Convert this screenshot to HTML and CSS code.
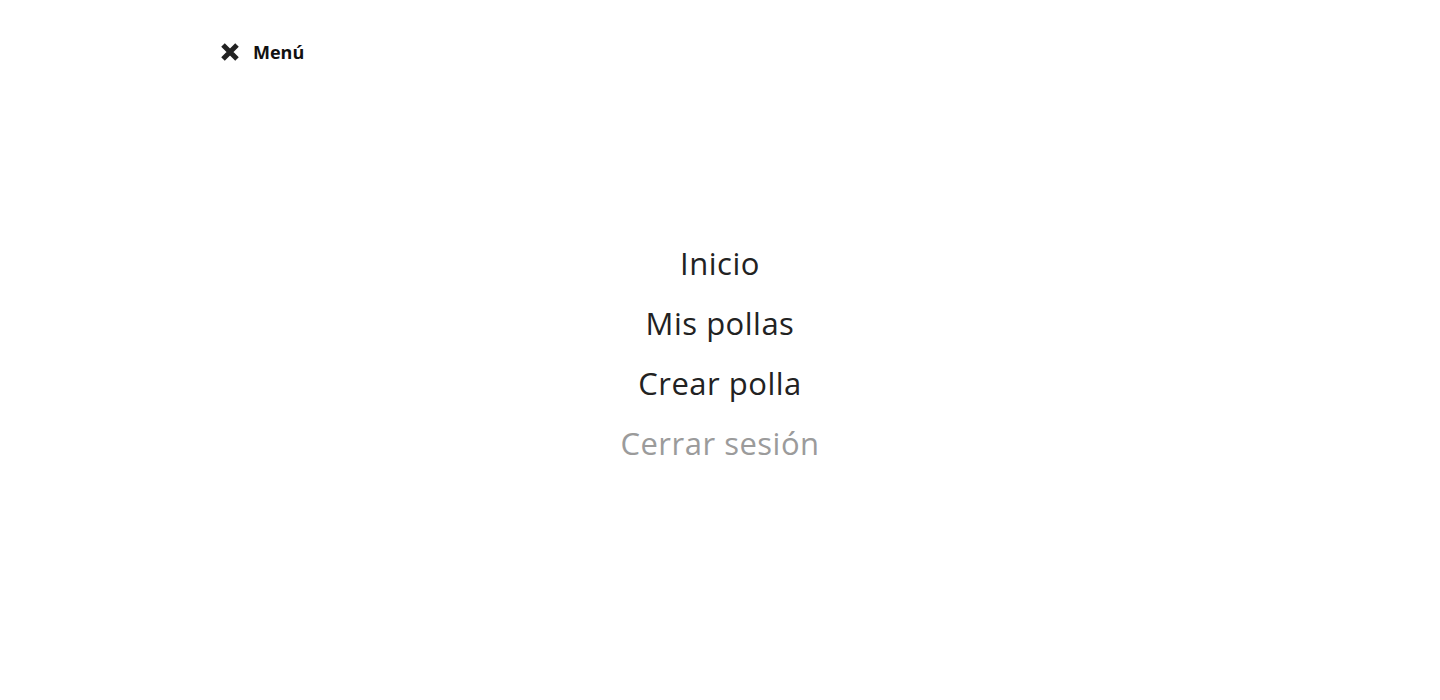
FILE: index.html
```html
<!DOCTYPE html>
<html lang="es">
  <head>
    <meta charset="UTF-8" />
    <meta name="viewport" content="width=device-width, initial-scale=1.0" />
    <title>Menú</title>
    <link rel="stylesheet" href="styles.css">
  </head>
  <body>
    <div class="wrap">
      <header class="top">
        <button class="close" type="button">
          <svg width="18" height="18" viewBox="0 0 18 18">
            <path d="M2 2 L16 16 M16 2 L2 16" stroke="#222" stroke-width="5" stroke-linecap="butt" />
          </svg>
          <span>Menú</span>
        </button>
      </header>
      <nav class="menu">
        <a href="#">Inicio</a>
        <a href="#">Mis pollas</a>
        <a href="#">Crear polla</a>
        <a href="#" class="logout">Cerrar sesión</a>
      </nav>
    </div>
  </body>
</html>
```

FILE: styles.css
```css
* {
  box-sizing: border-box;
  margin: 0;
  padding: 0;
}
body {
  background-color: #fff;
  font-family: "Open Sans", "Liberation Sans", sans-serif;
  color: #222;
}
.wrap {
  height: 700px;
  display: flex;
  flex-direction: column;
}
.top {
  padding: 40px 0 0 221px;
}
.close {
  display: flex;
  align-items: center;
  gap: 14px;
  background: none;
  border: none;
  font-family: inherit;
  font-size: 18px;
  font-weight: 700;
  color: #111;
  cursor: pointer;
}
.menu {
  flex: 1;
  display: flex;
  flex-direction: column;
  align-items: center;
  justify-content: center;
  gap: 18px;
  padding-bottom: 58px;
}
.menu a {
  font-size: 31px;
  letter-spacing: 0.5px;
  line-height: 42px;
  color: #222;
  text-decoration: none;
}
.menu a.logout {
  color: #9b9b9b;
}
```
